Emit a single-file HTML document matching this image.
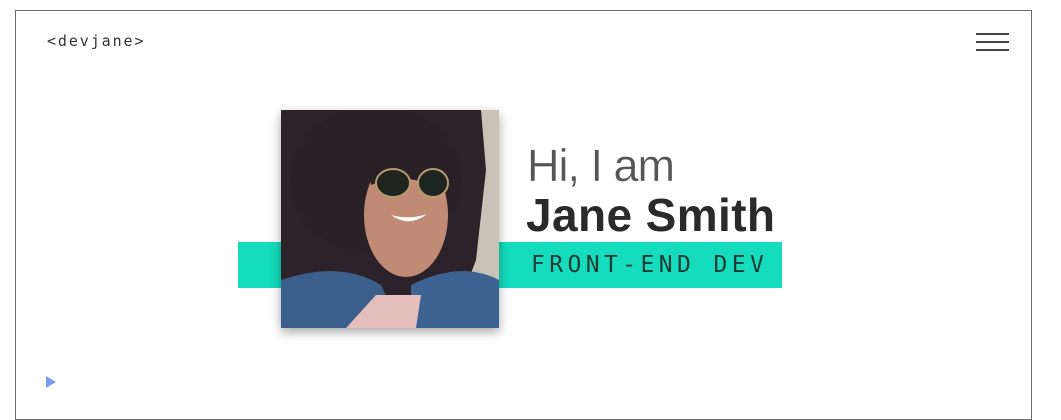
<!DOCTYPE html>
<html><head><style>
body{margin:0;width:1061px;height:408px;background:#fff;overflow:hidden;position:relative;font-family:"Liberation Sans",sans-serif}
.frame{position:absolute;left:15px;top:10px;width:1017px;height:410px;border:1px solid #6b6b6b;box-sizing:border-box}
.logo{position:absolute;left:47px;top:32px;font:15px "DejaVu Sans Mono","Liberation Mono",monospace;letter-spacing:1.9px;color:#333}
.hb{position:absolute;left:976px;width:33px;height:2px;background:#444}
.bar{position:absolute;left:238px;top:242px;width:544px;height:46px;background:#14dcbc}
.photo{position:absolute;left:281px;top:110px;width:218px;height:218px;overflow:hidden;box-shadow:0 4px 10px rgba(0,0,0,.35)}
.t1{position:absolute;left:527px;top:140px;font-size:45px;color:#555;letter-spacing:-1px;-webkit-text-stroke:0.3px #fff}
.t2{position:absolute;left:526px;top:188px;font-size:46px;font-weight:bold;color:#2a2a2a;letter-spacing:0.4px}
.t3{position:absolute;left:531px;top:252px;font:23px "DejaVu Sans Mono","Liberation Mono",monospace;letter-spacing:4.4px;color:#1c3a36}
</style></head><body>
<div class="frame"></div>
<div class="logo">&lt;devjane&gt;</div>
<div class="hb" style="top:33px"></div><div class="hb" style="top:41px"></div><div class="hb" style="top:49px"></div>
<svg style="position:absolute;left:45px;top:375px" width="12" height="14"><path d="M1 1 L11 7 L1 13Z" fill="#7b9cf5"/></svg>
<div class="bar"></div>
<div class="photo">
<svg width="218" height="218" viewBox="0 0 218 218">
<rect width="218" height="218" fill="#c9c3b7"/>
<path d="M0 0 H200 L205 60 L195 150 L180 190 L0 200Z" fill="#2b2329"/>
<ellipse cx="95" cy="70" rx="85" ry="75" fill="#2a2127"/>
<ellipse cx="125" cy="105" rx="42" ry="62" fill="#c08a74"/>
<path d="M85 40 Q125 10 165 50 L160 80 Q125 60 90 75Z" fill="#2a2127"/>
<ellipse cx="112" cy="73" rx="17" ry="14" fill="#1e2420" stroke="#b59a6a" stroke-width="2"/>
<ellipse cx="152" cy="73" rx="15" ry="14" fill="#1e2420" stroke="#b59a6a" stroke-width="2"/>
<path d="M110 105 Q128 118 146 104 Q128 110 110 105Z" fill="#fff"/>
<path d="M0 170 Q60 150 100 175 L120 218 H0Z" fill="#3a5f8c"/>
<path d="M130 175 Q180 150 218 170 V218 H130Z" fill="#3d6392"/>
<path d="M95 185 L140 185 L135 218 H65Z" fill="#e4bfbb"/>
</svg></div>
<div class="t1">Hi, I am</div>
<div class="t2">Jane Smith</div>
<div class="t3">FRONT-END DEV</div>
</body></html>
